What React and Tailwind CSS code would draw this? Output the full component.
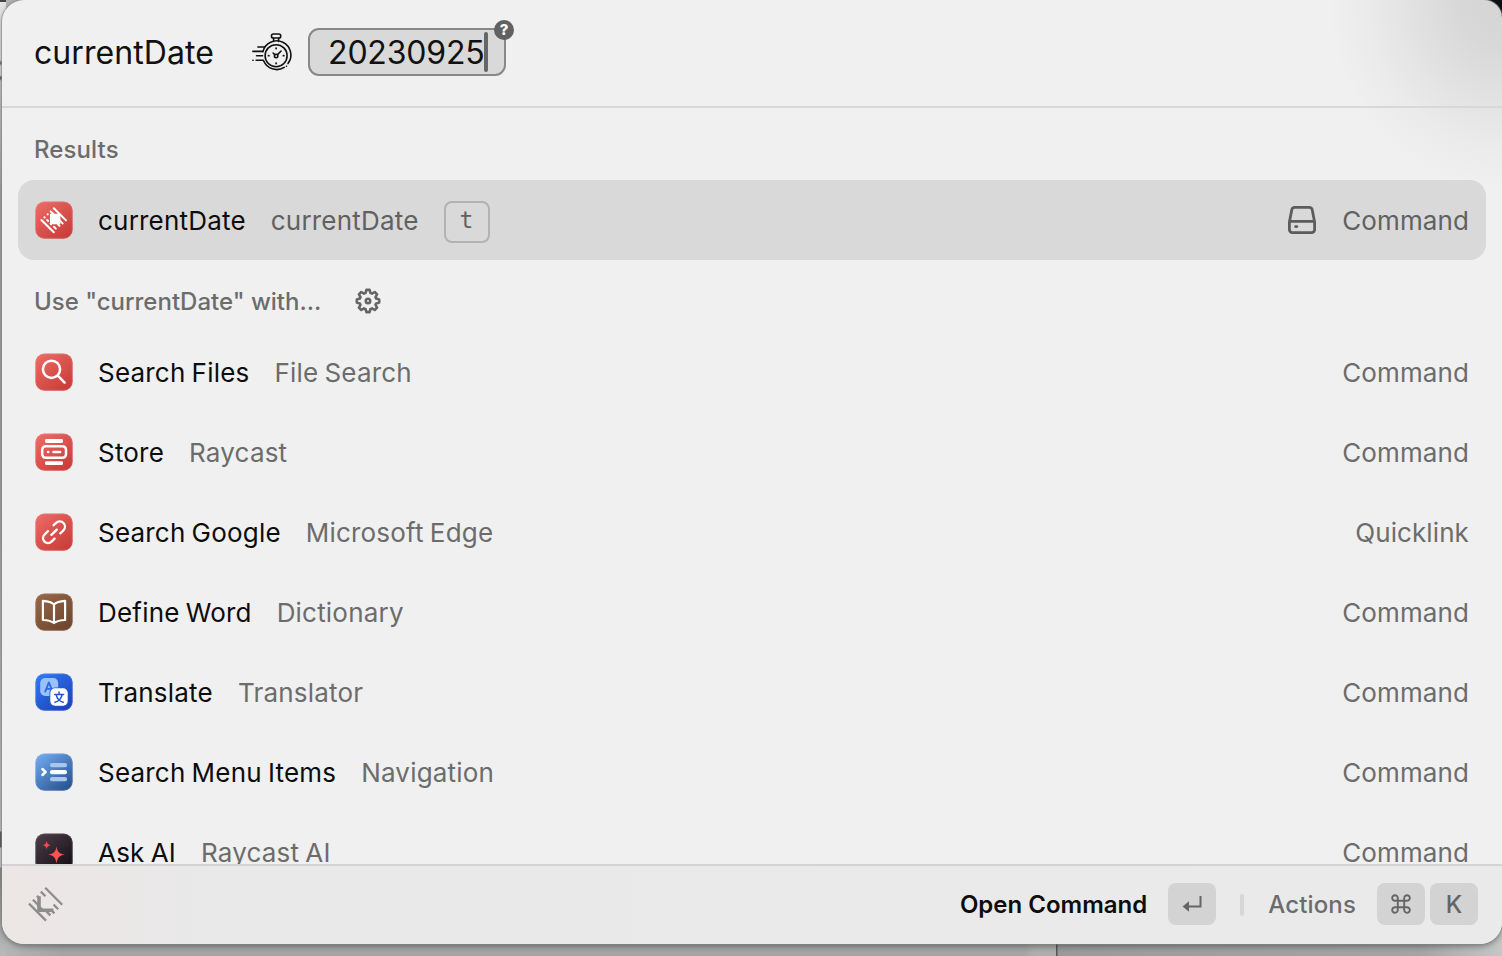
import React from "react";

function Tile({ from, to, children, id }) {
  return (
    <svg width="38" height="38" viewBox="0 0 38 38" className="shrink-0">
      <defs>
        <linearGradient id={id} x1="0.1" y1="0" x2="0.9" y2="1">
          <stop offset="0" stopColor={from} />
          <stop offset="1" stopColor={to} />
        </linearGradient>
      </defs>
      <rect x="0.3" y="0.5" width="37.4" height="37.2" rx="9" fill={`url(#${id})`} />
      <rect x="0.8" y="1" width="36.4" height="36.2" rx="8.6" fill="none" stroke="#fff" strokeOpacity="0.12" />
      {children}
    </svg>
  );
}

const RED = { from: "#ec6a66", to: "#c63b35" };

function CommandIcon() {
  return (
    <Tile id="g-cmd" {...RED}>
      <path d="M15 12.8h10.4v10.4H15z" fill="#fff" />
      <path
        d="M18.8 7.2L31 19.4M15.6 10.4L19 13.8M24 18.6L27.6 22.4M12.6 13.2l.2.2M9.4 16.2l.3.3M12.2 19l1 1M6.4 19L18.8 31.2M15.6 22.6l.6.6M19 25.8l1.8 1.8M23 23.4L24.4 24.8"
        stroke="#fff" strokeWidth="2" strokeLinecap="round" fill="none"
      />
    </Tile>
  );
}

function SearchIcon() {
  return (
    <Tile id="g-search" {...RED}>
      <g fill="none" stroke="#fff" strokeWidth="2.5" strokeLinecap="round">
        <circle cx="16.5" cy="16.3" r="8.6" />
        <path d="M22.8 22.6L29.6 29.6" />
      </g>
    </Tile>
  );
}

function StoreIcon() {
  return (
    <Tile id="g-store" {...RED}>
      <rect x="10" y="6" width="18" height="3.9" rx="1.4" fill="#fff" />
      <rect x="10" y="28.2" width="18" height="3.9" rx="1.4" fill="#fff" />
      <rect x="7.2" y="13.2" width="23.8" height="11.6" rx="3.6" fill="none" stroke="#fff" strokeWidth="2.5" />
      <path d="M13 19h.4M18.4 19h6.8" stroke="#fff" strokeWidth="2.4" strokeLinecap="round" />
    </Tile>
  );
}

function LinkIcon() {
  return (
    <Tile id="g-link" {...RED}>
      <g fill="none" stroke="#fff" strokeWidth="2.3" strokeLinecap="round">
        <path d="M18.6 12.2l2.5-2.3a5.2 5.2 0 0 1 7.4 .1a5.2 5.2 0 0 1 0 7.2l-3.2 3.2" />
        <path d="M13 18L9.5 21.6a5 5 0 0 0 0 7a5 5 0 0 0 7 0l3.1-3" />
        <path d="M16.4 21.9L21.8 16.6" />
      </g>
    </Tile>
  );
}

function BookIcon() {
  return (
    <Tile id="g-book" from="#976746" to="#6c442c">
      <path
        d="M19 11.6Q16 8.4 7.9 7.9V27Q15.4 27.2 19 30Q22.6 27.2 30.1 27V7.9Q22 8.4 19 11.6V30"
        fill="none" stroke="#fff" strokeWidth="2.2" strokeLinejoin="round"
      />
    </Tile>
  );
}

function TranslateIcon() {
  return (
    <Tile id="g-tr" from="#2f79f4" to="#1b3fb5">
      <rect x="5.2" y="5" width="18" height="18" rx="5" fill="#9bc0fa" />
      <path d="M10.2 18.6L13.9 9.4L17.6 18.6M11.4 15.8h5" fill="none" stroke="#2b6be6" strokeWidth="1.8" strokeLinecap="round" strokeLinejoin="round" />
      <rect x="14.4" y="14.4" width="19.2" height="19.2" rx="5.4" fill="#2758d4" />
      <rect x="15.3" y="15.3" width="17.4" height="17.4" rx="4.6" fill="#fff" />
      <path d="M24 19v2M19.6 21.6h9M27 21.8c-.8 3.6-3.2 6.4-7 7.4M21.2 21.8c.8 3.6 3.2 6.4 7 7.4" fill="none" stroke="#2554c8" strokeWidth="1.5" strokeLinecap="round" />
    </Tile>
  );
}

function MenuItemsIcon() {
  return (
    <Tile id="g-menu" from="#71aaf0" to="#244f8c">
      <path d="M7.4 16L10.6 19L7.4 22" fill="none" stroke="#fff" strokeWidth="2.5" strokeLinecap="round" strokeLinejoin="round" />
      <rect x="15" y="10" width="17" height="4.2" rx="2" fill="#a9c7e8" />
      <rect x="15" y="17" width="17" height="4.2" rx="2" fill="#fff" />
      <rect x="15" y="24" width="17" height="4.2" rx="2" fill="#a9c7e8" />
    </Tile>
  );
}

function AskIcon() {
  return (
    <Tile id="g-ask" from="#4b3c46" to="#120e16">
      <path d="M21.5 13.4C22.6 19 23.8 20.4 30 21.6C23.8 22.8 22.6 24.6 21.5 30.6C20.4 24.6 19.2 22.8 13 21.6C19.2 20.4 20.4 19 21.5 13.4Z" fill="#fb5450" />
      <path d="M11.6 7.8C12.2 10.8 12.8 11.5 15.8 12.2C12.8 12.9 12.2 13.5 11.6 16.6C11 13.5 10.4 12.9 7.6 12.2C10.4 11.5 11 10.8 11.6 7.8Z" fill="#fb4a46" />
    </Tile>
  );
}

function Stopwatch() {
  return (
    <svg width="42" height="40" viewBox="0 0 42 40" fill="none" stroke="#111" strokeWidth="1.6" strokeLinecap="round" className="shrink-0">
      <rect x="19.5" y="2" width="9.2" height="4" rx="1.8" />
      <path d="M21.6 6.2v3.2M26.6 6.2v3.2" />
      <path d="M10.9 19.6A14.2 14.2 0 1 1 36 31.6M32.2 35.4A14.2 14.2 0 0 1 11.6 28.8M34.4 34.2h.1" />
      <circle cx="24.1" cy="23.7" r="11" />
      <circle cx="24.1" cy="24" r="1.7" />
      <path d="M25.5 22.6L29.1 19M22.8 22.6L21.1 21" />
      <path d="M24.1 16.2v.4M24.1 31.2v.4M16.5 23.7h.4M31.4 23.7h.4" strokeWidth="1.8" />
      <path d="M5.9 15h6.4M.9 19.4h10M4.6 23.8h6M.9 28.2h.2M4.1 28.2h7.2" />
    </svg>
  );
}

function Gear() {
  return (
    <svg width="26" height="26" viewBox="0 0 26 26" fill="none" stroke="#656565" strokeWidth="2.6" strokeLinejoin="round" className="shrink-0">
      <path d="M11.4 1.9h3.2l.8 3l1.6.7l2.7-1.6l2.4 2.4l-1.6 2.7l.7 1.5l3 .8v3.2l-3 .8l-.7 1.5l1.6 2.7l-2.4 2.4l-2.7-1.6l-1.6.7l-.8 3h-3.2l-.8-3l-1.6-.7l-2.7 1.6l-2.4-2.4l1.6-2.7l-.7-1.5l-3-.8v-3.2l3-.8l.7-1.5l-1.6-2.7l2.4-2.4l2.7 1.6l1.6-.7z" />
      <circle cx="13" cy="13" r="2.2" />
    </svg>
  );
}

function Drive() {
  return (
    <svg width="28" height="28" viewBox="0 0 28 28" fill="none" stroke="#5c5c5c" strokeWidth="2.8" strokeLinejoin="round" className="shrink-0">
      <path d="M6.8 1.4h14.4a3 3 0 0 1 3 2.4L26.6 16v7.6a3 3 0 0 1-3 3H4.4a3 3 0 0 1-3-3V16L3.8 3.8a3 3 0 0 1 3-2.4zM1.6 15.4h24.8" />
      <path d="M7.6 20.6h1.2" strokeLinecap="round" />
    </svg>
  );
}

function FooterLogo() {
  return (
    <svg width="36" height="36" viewBox="0 0 36 36" fill="none" stroke="#8e8d8d" strokeWidth="2.3" className="shrink-0">
      <path d="M17.2 .8L34.2 17.8M12.8 4.6L17.4 9.2M8.9 8.7L12 11.8M4.9 12.7L11 18.8M1 16.6L18 33.6M25.6 17.6L30.2 22.2M23.6 23.6L26.4 26.4M18.4 24.4L22.4 28.4M9.6 18L15 23.4" />
      <path d="M11 9.2V23.2H25.4" strokeWidth="3.6" />
    </svg>
  );
}

const ROWS = [
  [SearchIcon, "Search Files", "File Search", "Command"],
  [StoreIcon, "Store", "Raycast", "Command"],
  [LinkIcon, "Search Google", "Microsoft Edge", "Quicklink"],
  [BookIcon, "Define Word", "Dictionary", "Command"],
  [TranslateIcon, "Translate", "Translator", "Command"],
  [MenuItemsIcon, "Search Menu Items", "Navigation", "Command"],
  [AskIcon, "Ask AI", "Raycast AI", "Command"],
];

function Row({ icon: Icon, title, subtitle, kind, selected }) {
  return (
    <div className={`mx-4 flex h-20 shrink-0 items-center rounded-2xl pr-[17px] pl-[17px] text-[26px] tracking-[0.2px] [word-spacing:-1.4px] ${selected ? "bg-[#d9d9d9]" : ""}`}>
      <Icon />
      <span className="ml-[25px] text-[#0d0d0d]">{title}</span>
      <span className={`ml-[25px] ${selected ? "text-[#616161]" : "text-[#6c6c6c]"}`}>{subtitle}</span>
      {selected && (
        <span className="mt-1 ml-[25px] flex h-[42px] w-[46px] items-center justify-center rounded-lg border-2 border-[#b2b2b2] pb-1 font-['DejaVu_Sans_Mono',monospace] text-[23px] text-[#616161]">t</span>
      )}
      <span className="flex-1" />
      {selected && <Drive />}
      <span className={`ml-[26px] tracking-[0.1px] ${selected ? "text-[#616161]" : "text-[#6c6c6c]"}`}>{kind}</span>
    </div>
  );
}

function Key({ children }) {
  return <span className="mb-0.5 flex h-[42px] w-12 items-center justify-center rounded-lg bg-[#d3d3d3] text-2xl text-[#656565]">{children}</span>;
}

export default function App() {
  return (
    <div className="h-[956px] w-[1502px] overflow-hidden bg-[linear-gradient(#0c1118,#0c1118),linear-gradient(#444_0,#444_2px,#e4e4e4_2px,#e0e0e0_60px,#666_63px,#ddd_66px,#ddd_75px,#555_78px,#ccc_81px,#a8a8a8_200px,#a8a8a8_500px,#c4c6c5_831px,#666_832px,#666_847px,#ccc_848px,#ccc_867px,#8f9190_868px,#b8bab9_956px),linear-gradient(to_right,#b5b7b6_0,#a3a5a4_60px,#a3a5a4_1024px,#acaeac_1034px,#acaeac_1056px,#555_1056px,#555_1057px,#999b9a_1058px,#a3a5a4_1420px,#c5c7c6_1502px)] bg-[length:30px_20px,6px_100%,100%_100%] bg-[position:right_top,left_top,left_top] bg-no-repeat pl-0.5 font-[Inter,sans-serif]">
      <div className="flex h-[944px] flex-col overflow-hidden rounded-[22px] rounded-tr-[18px] bg-[#f0f0f0] bg-[radial-gradient(ellipse_175px_190px_at_1500px_0px,#d4d4d4_0%,#d8d8d8_25%,#e2e2e2_52%,#ebebeb_78%,#f0f0f0_100%)] shadow-[0_0_0_1px_#8888,0_2px_6px_#0006]">
        <header className="flex h-[108px] shrink-0 items-center border-b-2 border-[#d8d8d8] pb-0.5 pl-8 text-[32px] tracking-[0.08px] text-[#111]">
          <span className="pt-0.5">currentDate</span>
          <span className="ml-[38px] flex"><Stopwatch /></span>
          <div className="relative ml-[14px] flex h-12 w-[198px] items-center rounded-[11px] border-2 border-[#888] bg-[#d9d9d9] pl-[18px]">
            <span className="pt-0.5 tracking-[-0.2px]">20230925</span>
            <span className="h-10 w-1 rounded-full bg-[#666]" />
            <span className="absolute -top-[10px] -right-[10px] flex size-5 items-center justify-center rounded-full bg-[#616161] text-[15px] font-extrabold text-white">?</span>
          </div>
        </header>
        <main className="flex h-[756px] shrink-0 flex-col overflow-hidden">
          <h2 className="flex h-[72px] shrink-0 items-center pt-3 pl-8 text-2xl font-medium tracking-[0.1px] text-[#6c6c6c]">Results</h2>
          <Row icon={CommandIcon} title="currentDate" subtitle="currentDate" kind="Command" selected />
          <h2 className="flex h-[72px] shrink-0 items-center pt-3 pl-8 text-2xl font-medium text-[#6c6c6c]">
            <span>Use "currentDate" with...</span>
            <span className="mb-0.5 ml-[34px]"><Gear /></span>
          </h2>
          {ROWS.map(([icon, title, subtitle, kind]) => (
            <Row key={title} icon={icon} title={title} subtitle={subtitle} kind={kind} />
          ))}
        </main>
        <footer className="flex h-20 shrink-0 items-center border-t-2 border-[#d3d3d3] bg-[linear-gradient(to_right,#ece6e5,#e9e9e9_220px,#eaeaea)] pr-6 pl-[26px] text-2xl font-medium">
          <FooterLogo />
          <span className="flex-1" />
          <span className="mr-[21px] font-semibold text-[#0d0d0d]">Open Command</span>
          <Key>
            <svg width="20" height="18" viewBox="0 0 20 18" fill="none" stroke="#656565" strokeWidth="2"><path d="M18.5 1v10.5H5" /><path d="M7 6.2v10.6L.6 11.5z" fill="#656565" stroke="none" /></svg>
          </Key>
          <span className="mx-6 h-[22px] w-1 rounded-full bg-[#d6d6d6]" />
          <span className="mr-[21px] tracking-[0.15px] text-[#6c6c6c]">Actions</span>
          <div className="flex gap-[5px]">
            <Key>
              <svg width="20" height="20" viewBox="0 0 20 20" fill="none" stroke="#656565" strokeWidth="1.9"><path d="M6.8 6.8V4.1A2.8 2.8 0 1 0 4.1 6.8H15.9A2.8 2.8 0 1 0 13.2 4.1V15.9A2.8 2.8 0 1 0 15.9 13.2H4.1A2.8 2.8 0 1 0 6.8 15.9Z" /></svg>
            </Key>
            <Key><span className="pt-0.5">K</span></Key>
          </div>
        </footer>
      </div>
    </div>
  );
}
